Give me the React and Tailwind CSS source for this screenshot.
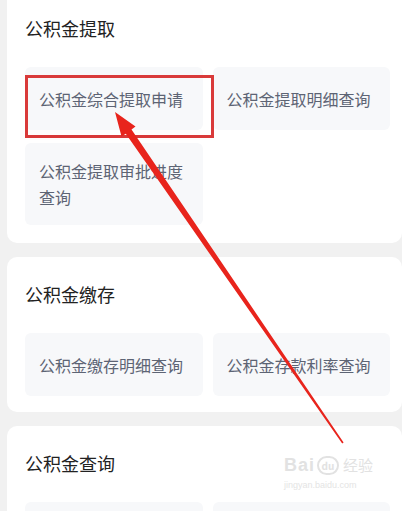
import React from "react";

const sections = [
  {
    title: "公积金提取",
    items: ["公积金综合提取申请", "公积金提取明细查询", "公积金提取审批进度查询"],
  },
  {
    title: "公积金缴存",
    items: ["公积金缴存明细查询", "公积金存款利率查询"],
  },
  {
    title: "公积金查询",
    items: ["", ""],
  },
];

function Section({ title, items, first }) {
  return (
    <div
      className={`w-[395px] ml-[7px] bg-white rounded-[10px] pt-6 pl-[18px] pr-3 ${
        first ? "-mt-[9px] pb-[18px]" : "pb-4"
      }`}
    >
      <h2 className="text-[18px] leading-[26px] text-[#222222] mb-[26px]">{title}</h2>
      <div className="grid grid-cols-2 gap-x-[10px] gap-y-[13px]">
        {items.map((item, i) => (
          <div
            key={i}
            className="min-h-[63px] py-[15px] px-[14px] bg-[#f7f8fa] rounded-md flex items-center text-[16px] leading-[26px] text-[#5d6474]"
          >
            {item}
          </div>
        ))}
      </div>
    </div>
  );
}

export default function App() {
  return (
    <div
      className="relative w-[402px] h-[511px] overflow-hidden bg-[#f1f1f1] flex flex-col gap-[14px]"
      style={{ fontFamily: '"Noto Sans CJK SC", "Noto Sans", sans-serif' }}
    >
      {sections.map((s, i) => (
        <Section key={s.title} {...s} first={i === 0} />
      ))}

      {/* annotation box */}
      <div className="absolute left-[25px] top-[75px] w-[189px] h-[63px] border-[3px] border-[#d93a3a] pointer-events-none" />

      {/* annotation arrow */}
      <svg
        className="absolute left-0 top-0 pointer-events-none"
        width="402"
        height="511"
        viewBox="0 0 402 511"
      >
        <polygon
          points="115,112 135.5,126.5 131.5,129.6 343.6,442.6 342.2,443.6 125.8,133.7 121.5,136.6"
          fill="#e8241c"
        />
      </svg>

      {/* watermark */}
      <div className="absolute left-[284px] top-[455px] flex flex-col items-start pointer-events-none">
        <div className="flex items-center gap-[2px] text-[#e2e2e2]">
          <span
            className="text-[18px] leading-[20px] font-bold tracking-[1px]"
            style={{ fontFamily: '"Liberation Sans", sans-serif' }}
          >
            Bai
          </span>
          <span className="w-[22px] h-[19px] rounded-full border-2 border-[#e2e2e2] text-[10px] leading-[15px] text-center font-bold">
            du
          </span>
          <span className="text-[15px] leading-[20px] ml-[2px]">经验</span>
        </div>
        <span
          className="text-[9px] leading-[12px] text-[#e4e4e4] mt-[4px]"
          style={{ fontFamily: '"Liberation Sans", sans-serif' }}
        >
          jingyan.baidu.com
        </span>
      </div>
    </div>
  );
}
